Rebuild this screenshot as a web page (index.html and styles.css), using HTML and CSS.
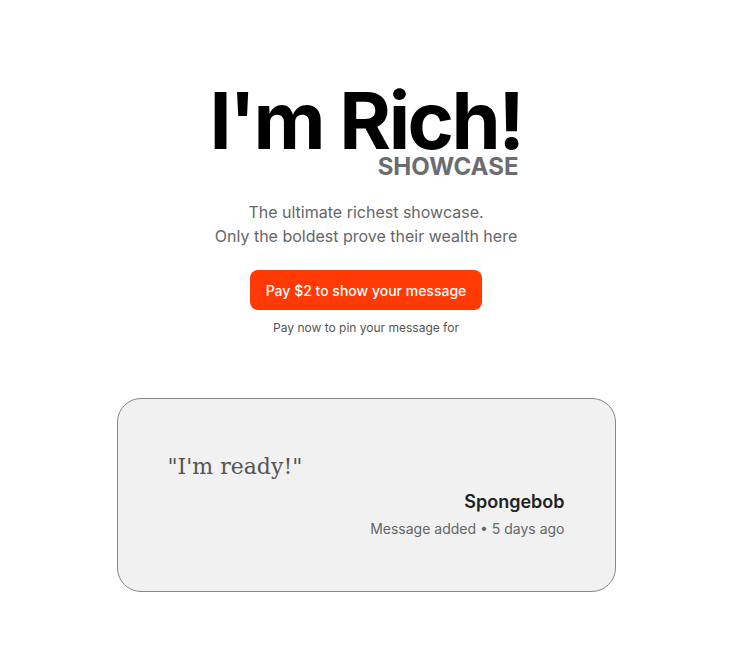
FILE: index.html
```html
<!DOCTYPE html>
<html lang="en">
<head>
    <meta charset="UTF-8">
    <meta name="viewport" content="width=device-width, initial-scale=1.0">
    <title>I'm Rich! Showcase</title>
    <link rel="stylesheet" href="styles.css">
</head>
<body>
    <div class="container">
        <header class="hero">
            <div class="brand">
                <h1>I'm Rich!</h1>
                <span class="tag">SHOWCASE</span>
            </div>
            <p class="lead">The ultimate richest showcase.<br>Only the boldest prove their wealth here</p>
            <button class="pay">Pay $2 to show your message</button>
            <p class="hint">Pay now to pin your message for</p>
        </header>

        <div class="card">
            <p class="message">"I'm ready!"</p>
            <div class="signature">
                <span class="author">Spongebob</span>
                <span class="meta">Message added &bull; 5 days ago</span>
            </div>
        </div>
    </div>
</body>
</html>
```

FILE: styles.css
```css
body {
    font-family: Inter, "Noto Sans", sans-serif;
    background-color: #fff;
    color: #111;
    margin: 0;
}
.container {
    display: flex;
    flex-direction: column;
    align-items: center;
    padding: 84px 0 0 3px;
}
.hero {
    display: flex;
    flex-direction: column;
    align-items: center;
    text-align: center;
}
.brand {
    display: flex;
    flex-direction: column;
    align-items: flex-end;
}
h1 {
    font-size: 79px;
    font-weight: 700;
    letter-spacing: -2.5px;
    line-height: 72px;
    margin: 0;
    color: #000;
}
.tag {
    font-size: 24px;
    font-weight: 700;
    color: #6b6b70;
    line-height: 20px;
    margin: 1px 4px 0 0;
}
.lead {
    font-size: 16px;
    line-height: 24px;
    color: #666;
    margin: 23px 0 0;
}
.pay {
    margin-top: 22px;
    background-color: #ff3a05;
    color: #fff;
    border: none;
    border-radius: 8px;
    padding: 0 16px;
    height: 40px;
    font-family: inherit;
    font-size: 14px;
    font-weight: 500;
    cursor: pointer;
}
.hint {
    font-size: 12px;
    color: #555;
    margin: 10px 0 0;
}
.card {
    margin-top: 63px;
    width: 499px;
    box-sizing: border-box;
    padding: 55px 50px 54px;
    background-color: #f1f1f1;
    border: 1px solid #888;
    border-radius: 24px;
}
.message {
    font-family: "DejaVu Serif", "Liberation Serif", serif;
    font-size: 22px;
    color: #555;
    margin: 0 0 12px;
}
.signature {
    display: flex;
    flex-direction: column;
    align-items: flex-end;
    gap: 8px;
}
.author {
    font-size: 18px;
    font-weight: 600;
    color: #222;
}
.meta {
    font-size: 14px;
    color: #666;
}
```
